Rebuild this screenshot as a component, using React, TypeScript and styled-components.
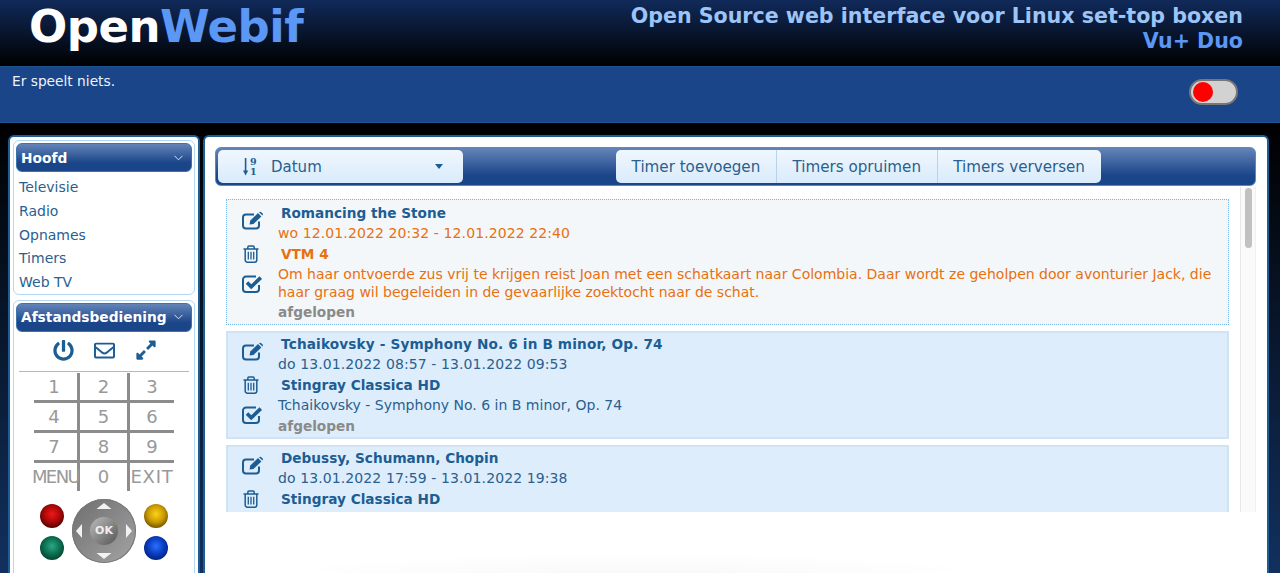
import React from 'react'
import styled, { createGlobalStyle } from 'styled-components'
import { FaPowerOff, FaRegEnvelope, FaExpandAlt } from 'react-icons/fa'

const GlobalStyle = createGlobalStyle`
  html, body {
    margin: 0;
    height: 100%;
    overflow: hidden;
    background: #000;
  }
  body {
    font-family: "DejaVu Sans", Verdana, sans-serif;
  }
`

const Page = styled.div`
  height: 573px;
  overflow: hidden;
  display: flex;
  flex-direction: column;
  background: linear-gradient(to bottom, #000 123px, #12305f 100%);
`

const Header = styled.header`
  height: 66px;
  flex: none;
  display: flex;
  justify-content: space-between;
  padding: 0 37px 0 29px;
  background: linear-gradient(to bottom, #102a5a, #000);
`

const Logo = styled.div`
  font-size: 45px;
  font-weight: bold;
  line-height: 54px;
  color: #fff;
  letter-spacing: -0.5px;
  span {
    color: #5b97f5;
  }
`

const Slogan = styled.div`
  text-align: right;
  font-weight: bold;
  padding-top: 4px;
`

const SloganLine = styled.div<{ $accent?: boolean }>`
  font-size: 20.6px;
  line-height: 25px;
  color: ${({ $accent }) => ($accent ? '#5b97f5' : '#9cc4f8')};
`

const NowPlaying = styled.div`
  height: 57px;
  flex: none;
  box-sizing: border-box;
  display: flex;
  justify-content: space-between;
  padding: 5px 42px 0 12px;
  background: #1a4589;
  border-top: 1px solid #1e5490;
  border-bottom: 1px solid #1e5490;
  font-size: 13.75px;
  line-height: 18px;
  color: #eef3fa;
`

const Toggle = styled.div`
  width: 49px;
  height: 26px;
  margin-top: 7px;
  box-sizing: border-box;
  padding: 1px 0 0 2px;
  border: 2px solid #777;
  border-radius: 13px;
  background: #d2d2d2;
  &::before {
    content: '';
    display: block;
    width: 20px;
    height: 20px;
    border-radius: 50%;
    background: #f00;
  }
`

const Content = styled.div`
  flex: 1;
  min-height: 0;
  display: flex;
  gap: 3px;
  padding: 12px 11px 0 8px;
`

const Sidebar = styled.aside`
  width: 192px;
  height: 460px;
  flex: none;
  box-sizing: border-box;
  padding: 3px 3px 0;
  border: 2px solid #1c5d94;
  border-bottom: 0;
  border-radius: 6px 6px 0 0;
  background: #fff;
  display: flex;
  flex-direction: column;
  gap: 5px;
`

const SideBox = styled.section<{ $fill?: boolean }>`
  box-sizing: border-box;
  padding: 2px 2px 0;
  border: 1px solid #b3d6f2;
  border-radius: 6px;
  flex: ${({ $fill }) => ($fill ? '1' : 'none')};
`

const SideTitle = styled.div`
  height: 29px;
  box-sizing: border-box;
  display: flex;
  align-items: center;
  justify-content: space-between;
  padding: 0 8px 0 4px;
  border-radius: 6px;
  border: 1px solid #3a74ad;
  background: linear-gradient(to bottom, #6484b8, #1a4589 70%);
  color: #fff;
  font-size: 13.75px;
  font-weight: bold;
`

const Chevron = () => (
  <svg width="9" height="6" viewBox="0 0 9 6" fill="none" stroke="#d5e3f5" strokeWidth="1">
    <path d="M0.5 0.8 L4.5 4.8 L8.5 0.8" />
  </svg>
)

const SideLinks = styled.div`
  padding-top: 4px;
  margin-bottom: -1px;
`

const SideLink = styled.div`
  height: 23.75px;
  line-height: 23.75px;
  padding-left: 3px;
  font-size: 14px;
  color: #2a5f8f;
`

const RemoteIcons = styled.div`
  height: 40px;
  box-sizing: border-box;
  display: flex;
  align-items: center;
  justify-content: center;
  gap: 20px;
  margin: 0 3px;
  padding: 0 0 2px 2px;
  border-bottom: 1px solid #8fc1ea;
  color: #1c5d94;
  font-size: 21px;
`

const Keypad = styled.div`
  width: 140px;
  margin: 1px auto 0;
  display: grid;
  grid-template-columns: 46px 50px 44px;
  grid-template-rows: 30px 30px 30px 28px;
`

const Key = styled.div<{ $col: number; $last?: boolean; $spacing?: number }>`
  display: flex;
  align-items: center;
  justify-content: center;
  box-sizing: border-box;
  color: #999;
  font-size: 18px;
  letter-spacing: ${({ $spacing }) => $spacing ?? 0}px;
  white-space: nowrap;
  padding-right: ${({ $col, $spacing }) => ($col === 1 && !$spacing ? '3px' : '0')};
  border-bottom: ${({ $last }) => ($last ? 'none' : '3px solid #8c8c8c')};
  border-right: ${({ $col }) => ($col < 3 ? '3px solid #8c8c8c' : 'none')};
`

const RemoteBottom = styled.div`
  display: grid;
  grid-template-columns: 24px 64px 24px;
  grid-template-rows: 35px 29px;
  column-gap: 8px;
  justify-content: center;
  align-items: center;
  padding-top: 8px;
`

const Ball = styled.div<{ $hi: string; $mid: string; $low: string }>`
  width: 24px;
  height: 24px;
  border-radius: 50%;
  background: radial-gradient(
    circle at 50% 42%,
    ${({ $hi }) => $hi} 0,
    ${({ $mid }) => $mid} 45%,
    ${({ $low }) => $low} 90%
  );
`

const Dpad = styled.div`
  position: relative;
  grid-column: 2;
  grid-row: 1 / span 2;
  width: 64px;
  height: 64px;
  border-radius: 50%;
  background: linear-gradient(135deg, #6e6e6e, #a4a4a4);
  box-shadow: inset 0 0 0 1px #777;
  display: flex;
  align-items: center;
  justify-content: center;
  svg {
    position: absolute;
    inset: 0;
  }
`

const OkButton = styled.div`
  position: relative;
  width: 28px;
  height: 28px;
  border-radius: 50%;
  background: linear-gradient(135deg, #bcbcbc, #555);
  display: flex;
  align-items: center;
  justify-content: center;
  color: #eee;
  font-size: 11px;
  font-weight: bold;
`

const Main = styled.main`
  flex: 1;
  min-width: 0;
  height: 438px;
  box-sizing: border-box;
  padding: 10px 11px 0 10px;
  border: 2px solid #1c5d94;
  border-bottom: 0;
  border-radius: 6px 6px 0 0;
  background: radial-gradient(ellipse 370px 22px at 432px 438px, #f8f8f8, #fff);
`

const Toolbar = styled.div`
  height: 39px;
  box-sizing: border-box;
  display: flex;
  align-items: center;
  gap: 153px;
  padding-left: 2px;
  border: 1px solid #4d8fc7;
  border-radius: 6px;
  background: linear-gradient(to bottom, #6484b8, #1a4589 75%);
`

const Dropdown = styled.div`
  width: 245px;
  height: 33px;
  box-sizing: border-box;
  display: flex;
  align-items: center;
  padding: 0 20px 0 25px;
  border-radius: 5px;
  background: linear-gradient(to bottom, #f0f7fe, #d9ebfb);
  color: #2a5f8f;
  font-size: 15px;
`

const SortIconWrap = styled.svg`
  margin-right: 13px;
`

const SortIcon = () => (
  <SortIconWrap width="15" height="20" viewBox="0 0 15 20" fill="#1c5d94">
    <path d="M1.8 1h1.6v14h-1.6z" />
    <path d="M0 13.5h5.2L2.6 18.5z" />
    <text x="7" y="8" fontFamily="DejaVu Serif, serif" fontWeight="bold" fontSize="9.5">9</text>
    <text x="7" y="18" fontFamily="DejaVu Serif, serif" fontWeight="bold" fontSize="9.5">1</text>
  </SortIconWrap>
)

const DropdownLabel = styled.span`
  flex: 1;
`

const Caret = styled.span`
  width: 0;
  height: 0;
  border: 4.5px solid transparent;
  border-top: 5px solid #1c5d94;
  border-bottom: 0;
`

const ButtonGroup = styled.div`
  display: flex;
  height: 33px;
  border-radius: 5px;
  overflow: hidden;
`

const ToolButton = styled.div`
  display: flex;
  align-items: center;
  padding: 0 15.6px;
  background: linear-gradient(to bottom, #f0f7fe, #d9ebfb);
  color: #2a5f8f;
  font-size: 15.15px;
  white-space: nowrap;
  & + & {
    border-left: 1px solid #b5d3ec;
  }
`

const ListArea = styled.div`
  height: 325px;
  margin-top: 1px;
  display: flex;
  overflow: hidden;
`

const TimerList = styled.div`
  flex: 1;
  min-width: 0;
  padding: 12px 11px 0 11px;
  display: flex;
  flex-direction: column;
  gap: 6px;
`

const ScrollTrack = styled.div`
  width: 16px;
  flex: none;
  box-sizing: border-box;
  padding: 1px 3px 0 4px;
  background: #fafafa;
  border-left: 1px solid #e8e8e8;
  border-right: 1px solid #f0f0f0;
`

const ScrollThumb = styled.div`
  height: 60px;
  border-radius: 4px;
  background: #c1c1c1;
`

const TimerCard = styled.div<{ $active?: boolean }>`
  flex: none;
  box-sizing: border-box;
  display: flex;
  border: ${({ $active }) => ($active ? '1px dotted #76b6ea' : '2px solid #cfe3f5')};
  padding: ${({ $active }) => ($active ? '3px 0 2px 14px' : '1px 0 1px 13px')};
  background: ${({ $active }) => ($active ? '#f3f7f9' : '#deedfb')};
`

const ActionColumn = styled.div`
  width: 37px;
  flex: none;
  box-sizing: border-box;
  display: flex;
  flex-direction: column;
  gap: 12px;
  padding: 8px 0 0 1px;
  svg {
    display: block;
  }
`

const EditIcon = () => (
  <svg width="22" height="19" viewBox="0 0 22 19" fill="none" stroke="#1c5d94">
    <path strokeWidth="2" d="M17 10.5V14.5a3 3 0 0 1-3 3H4a3 3 0 0 1-3-3V6.5a3 3 0 0 1 3-3H12" />
    <path fill="#1c5d94" stroke="none" d="M7.5 13.5 L8.3 9.5 L16 2 L19.4 5.4 L11.5 13 Z" />
    <path fill="#1c5d94" stroke="none" d="M17 1.2 Q18 0.2 19 1 L20.6 2.6 Q21.4 3.5 20.4 4.4 Z" />
  </svg>
)

const TrashWrap = styled.svg`
  margin: 3px 0 0 1px;
`

const TrashIcon = () => (
  <TrashWrap width="16" height="18" viewBox="0 0 16 18" fill="none" stroke="#1c5d94" strokeWidth="1.5">
    <path d="M0.5 4H15.5" />
    <path d="M4.8 4V2.2A1.2 1.2 0 0 1 6 1H10A1.2 1.2 0 0 1 11.2 2.2V4" />
    <path d="M2.2 4V15A2.2 2.2 0 0 0 4.4 17.2H11.6A2.2 2.2 0 0 0 13.8 15V4" />
    <path strokeWidth="1.3" d="M5.3 6.8V14.4M8 6.8V14.4M10.7 6.8V14.4" />
  </TrashWrap>
)

const CheckIcon = () => (
  <svg width="21" height="18" viewBox="0 0 21 18" fill="none" stroke="#1c5d94">
    <path strokeWidth="2" d="M17 10V14a3 3 0 0 1-3 3H4a3 3 0 0 1-3-3V4.5a3 3 0 0 1 3-3H14" />
    <path strokeWidth="3.6" d="M5 7.5 L9.2 11.7 L18.8 2.6" />
  </svg>
)

const TimerBody = styled.div<{ $active?: boolean }>`
  flex: 1;
  min-width: 0;
  padding-right: 10px;
  color: ${({ $active }) => ($active ? '#e8700f' : '#2a5f8f')};
  font-size: 14px;
`

const TimerTitle = styled.div<{ $wide?: boolean }>`
  padding-left: 3px;
  height: 20px;
  line-height: 20px;
  font-size: 13.65px;
  font-weight: bold;
  letter-spacing: ${({ $wide }) => ($wide ? '0.15px' : '0')};
  color: #1c5d94;
`

const TimerLine = styled.div`
  height: 20px;
  line-height: 20px;
`

const TimerDate = styled(TimerLine)`
  letter-spacing: 0.1px;
`

const TimerChannel = styled.div<{ $active?: boolean }>`
  padding-left: 3px;
  height: 21px;
  line-height: 23px;
  font-size: 13.65px;
  font-weight: bold;
  color: ${({ $active }) => ($active ? '#e8700f' : '#1c5d94')};
`

const TimerDescription = styled.div`
  line-height: 18px;
  padding-top: 1px;
`

const TimerState = styled.div`
  height: 21px;
  line-height: 22px;
  font-size: 13.65px;
  font-weight: bold;
  color: #8a8a8a;
`

const keys = ['1', '2', '3', '4', '5', '6', '7', '8', '9', 'MENU', '0', 'EXIT']

const keySpacing: Record<string, number> = { MENU: -1.6, EXIT: 0.8 }

const Actions = () => (
  <ActionColumn>
    <EditIcon />
    <TrashIcon />
    <CheckIcon />
  </ActionColumn>
)

const App = () => (
  <Page>
    <GlobalStyle />
    <Header>
      <Logo>
        Open<span>Webif</span>
      </Logo>
      <Slogan>
        <SloganLine>Open Source web interface voor Linux set-top boxen</SloganLine>
        <SloganLine $accent>Vu+ Duo</SloganLine>
      </Slogan>
    </Header>
    <NowPlaying>
      <div>Er speelt niets.</div>
      <Toggle />
    </NowPlaying>
    <Content>
      <Sidebar>
        <SideBox>
          <SideTitle>
            Hoofd
            <Chevron />
          </SideTitle>
          <SideLinks>
            <SideLink>Televisie</SideLink>
            <SideLink>Radio</SideLink>
            <SideLink>Opnames</SideLink>
            <SideLink>Timers</SideLink>
            <SideLink>Web TV</SideLink>
          </SideLinks>
        </SideBox>
        <SideBox $fill>
          <SideTitle>
            Afstandsbediening
            <Chevron />
          </SideTitle>
          <RemoteIcons>
            <FaPowerOff />
            <FaRegEnvelope />
            <FaExpandAlt size={22} />
          </RemoteIcons>
          <Keypad>
            {keys.map((key, i) => (
              <Key key={key} $col={(i % 3) + 1} $last={i > 8} $spacing={keySpacing[key]}>
                {key}
              </Key>
            ))}
          </Keypad>
          <RemoteBottom>
            <Ball $hi="#f01818" $mid="#a80808" $low="#2e0000" />
            <Dpad>
              <svg width="64" height="64" viewBox="0 0 64 64" fill="#f2f2f2">
                <path d="M32 4 L39.5 10 L24.5 10 Z" />
                <path d="M32 60 L39.5 54 L24.5 54 Z" />
                <path d="M4 32 L10 25 L10 39 Z" />
                <path d="M60 32 L54 25 L54 39 Z" />
              </svg>
              <OkButton>OK</OkButton>
            </Dpad>
            <Ball $hi="#ffd21a" $mid="#c99a00" $low="#4a3700" />
            <Ball $hi="#2aa886" $mid="#0c6e50" $low="#02301f" />
            <Ball $hi="#2a70ff" $mid="#0a3cc0" $low="#001a60" />
          </RemoteBottom>
        </SideBox>
      </Sidebar>
      <Main>
        <Toolbar>
          <Dropdown>
            <SortIcon />
            <DropdownLabel>Datum</DropdownLabel>
            <Caret />
          </Dropdown>
          <ButtonGroup>
            <ToolButton>Timer toevoegen</ToolButton>
            <ToolButton>Timers opruimen</ToolButton>
            <ToolButton>Timers verversen</ToolButton>
          </ButtonGroup>
        </Toolbar>
        <ListArea>
          <TimerList>
            <TimerCard $active>
              <Actions />
              <TimerBody $active>
                <TimerTitle>Romancing the Stone</TimerTitle>
                <TimerDate>wo 12.01.2022 20:32 - 12.01.2022 22:40</TimerDate>
                <TimerChannel $active>VTM 4</TimerChannel>
                <TimerDescription>
                  Om haar ontvoerde zus vrij te krijgen reist Joan met een schatkaart naar Colombia. Daar wordt ze
                  geholpen door avonturier Jack, die haar graag wil begeleiden in de gevaarlijke zoektocht naar de schat.
                </TimerDescription>
                <TimerState>afgelopen</TimerState>
              </TimerBody>
            </TimerCard>
            <TimerCard>
              <Actions />
              <TimerBody>
                <TimerTitle $wide>Tchaikovsky - Symphony No. 6 in B minor, Op. 74</TimerTitle>
                <TimerDate>do 13.01.2022 08:57 - 13.01.2022 09:53</TimerDate>
                <TimerChannel>Stingray Classica HD</TimerChannel>
                <TimerLine>Tchaikovsky - Symphony No. 6 in B minor, Op. 74</TimerLine>
                <TimerState>afgelopen</TimerState>
              </TimerBody>
            </TimerCard>
            <TimerCard>
              <Actions />
              <TimerBody>
                <TimerTitle>Debussy, Schumann, Chopin</TimerTitle>
                <TimerDate>do 13.01.2022 17:59 - 13.01.2022 19:38</TimerDate>
                <TimerChannel>Stingray Classica HD</TimerChannel>
              </TimerBody>
            </TimerCard>
          </TimerList>
          <ScrollTrack>
            <ScrollThumb />
          </ScrollTrack>
        </ListArea>
      </Main>
    </Content>
  </Page>
)

export default App
